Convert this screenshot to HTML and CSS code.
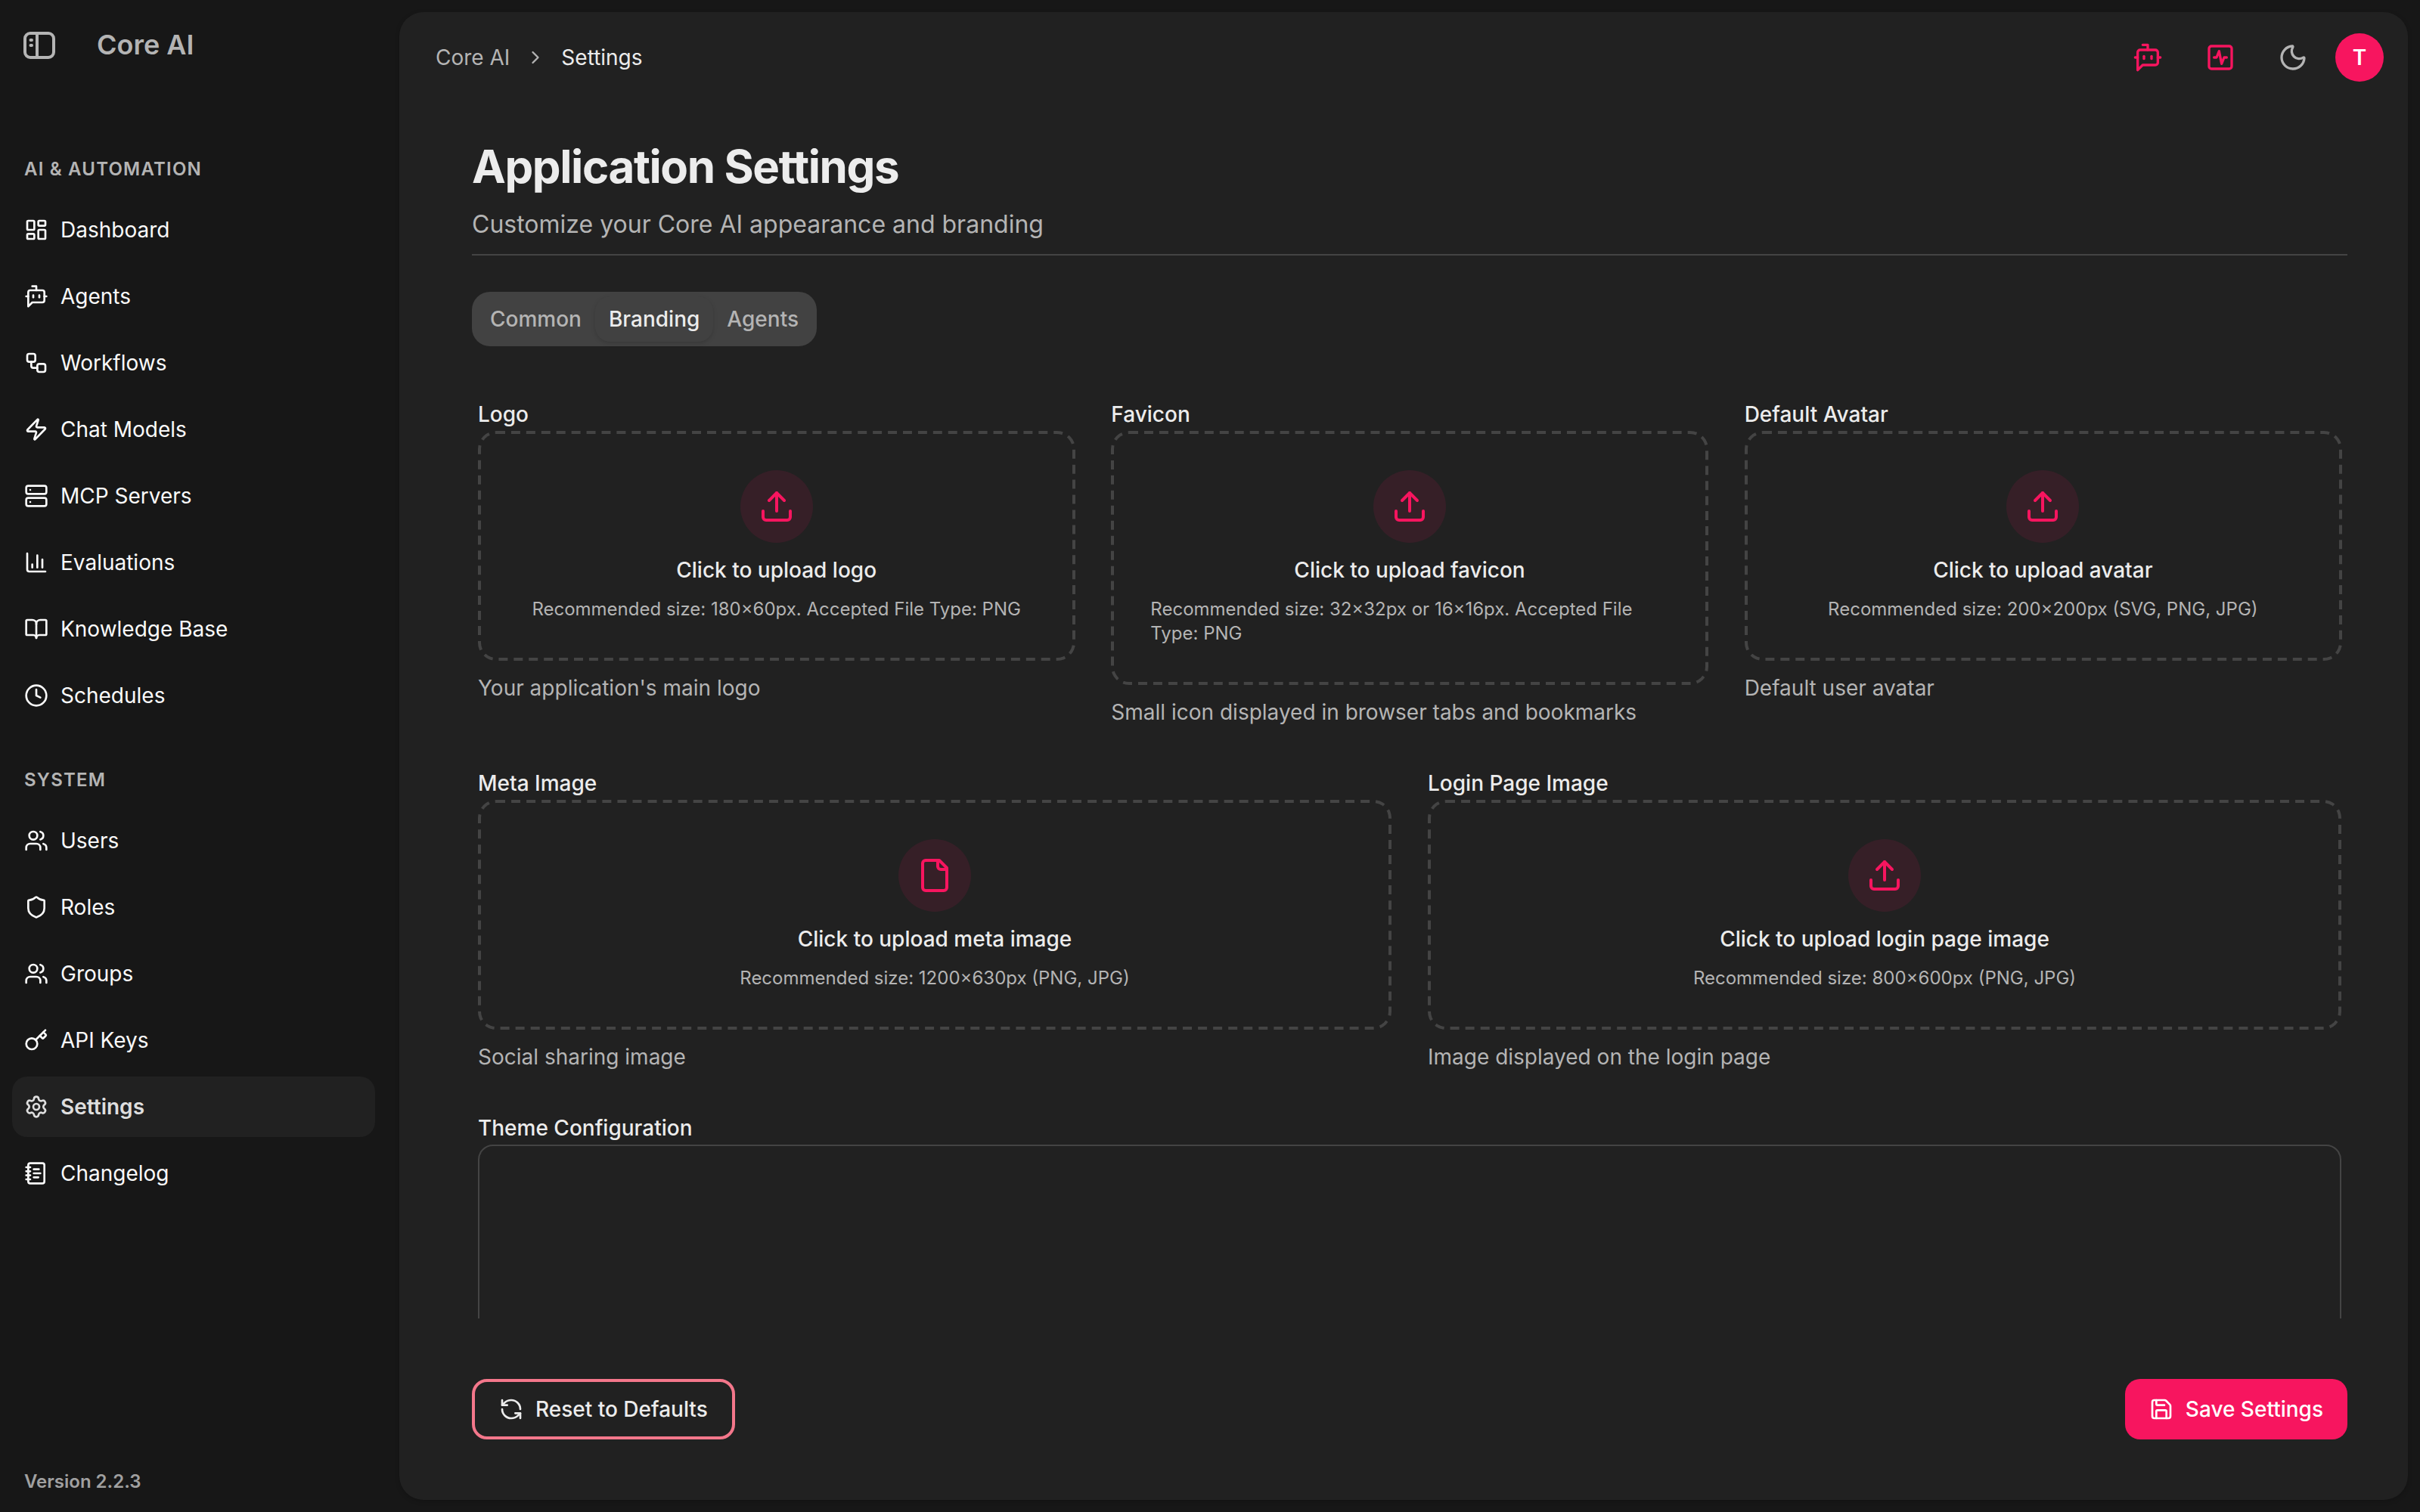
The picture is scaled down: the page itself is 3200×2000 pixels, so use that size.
FILE: index.html
```html
<!DOCTYPE html>
<html lang="en">
<head>
<meta charset="utf-8">
<title>Application Settings</title>
<link rel="stylesheet" href="styles.css">
</head>
<body>
<svg class="sprite" aria-hidden="true">
  <symbol id="i-bot" viewBox="0 0 24 24"><path d="M12 6V2H8"/><path d="m8 18-4 4V8a2 2 0 0 1 2-2h12a2 2 0 0 1 2 2v8a2 2 0 0 1-2 2Z"/><path d="M2 12h2"/><path d="M9 11v2"/><path d="M15 11v2"/><path d="M20 12h2"/></symbol>
  <symbol id="i-users" viewBox="0 0 24 24"><path d="M16 21v-2a4 4 0 0 0-4-4H6a4 4 0 0 0-4 4v2"/><circle cx="9" cy="7" r="4"/><path d="M22 21v-2a4 4 0 0 0-3-3.87"/><path d="M16 3.13a4 4 0 0 1 0 7.75"/></symbol>
  <symbol id="i-upload" viewBox="0 0 24 24"><path d="M21 15v4a2 2 0 0 1-2 2H5a2 2 0 0 1-2-2v-4"/><path d="m17 8-5-5-5 5"/><path d="M12 3v12"/></symbol>
</svg>
<div class="app">
  <aside class="sidebar">
    <div class="brand">
      <svg class="icon brand-toggle" viewBox="0 0 42 36"><rect x="2" y="2" width="38" height="32" rx="7"/><path d="M18 2v32"/><path d="M9.500 11h1.500M9.500 18h1.500"/></svg>
      <span class="brand-name">Core AI</span>
    </div>
    <nav class="nav">
      <section class="nav-group">
        <h2 class="nav-label">AI &amp; AUTOMATION</h2>
        <a class="nav-item"><svg class="icon" viewBox="0 0 24 24"><rect width="7" height="9" x="3" y="3" rx="1"/><rect width="7" height="5" x="14" y="3" rx="1"/><rect width="7" height="9" x="14" y="12" rx="1"/><rect width="7" height="5" x="3" y="16" rx="1"/></svg>Dashboard</a>
        <a class="nav-item"><svg class="icon"><use href="#i-bot"/></svg>Agents</a>
        <a class="nav-item"><svg class="icon" viewBox="0 0 24 24"><rect width="8" height="8" x="3" y="3" rx="2"/><path d="M7 11v4a2 2 0 0 0 2 2h4"/><rect width="8" height="8" x="13" y="13" rx="2"/></svg>Workflows</a>
        <a class="nav-item"><svg class="icon" viewBox="0 0 24 24"><path d="M4 14a1 1 0 0 1-.78-1.630l9.900-10.200a.5.5 0 0 1 .86.46l-1.920 6.020A1 1 0 0 0 13 10h7a1 1 0 0 1 .78 1.630l-9.900 10.200a.5.5 0 0 1-.86-.46l1.920-6.020A1 1 0 0 0 11 14z"/></svg>Chat Models</a>
        <a class="nav-item"><svg class="icon" viewBox="0 0 24 24"><rect width="20" height="8" x="2" y="2" rx="2"/><rect width="20" height="8" x="2" y="14" rx="2"/><path d="M6 6h.01M6 18h.01"/></svg>MCP Servers</a>
        <a class="nav-item"><svg class="icon" viewBox="0 0 24 24"><path d="M3 3v16a2 2 0 0 0 2 2h16"/><path d="M18 17V9"/><path d="M13 17V5"/><path d="M8 17v-3"/></svg>Evaluations</a>
        <a class="nav-item"><svg class="icon" viewBox="0 0 24 24"><path d="M12 7v14"/><path d="M3 18a1 1 0 0 1-1-1V4a1 1 0 0 1 1-1h5a4 4 0 0 1 4 4 4 4 0 0 1 4-4h5a1 1 0 0 1 1 1v13a1 1 0 0 1-1 1h-6a3 3 0 0 0-3 3 3 3 0 0 0-3-3z"/></svg>Knowledge Base</a>
        <a class="nav-item"><svg class="icon" viewBox="0 0 24 24"><circle cx="12" cy="12" r="10"/><path d="M12 6v6l4 2"/></svg>Schedules</a>
      </section>
      <section class="nav-group">
        <h2 class="nav-label">SYSTEM</h2>
        <a class="nav-item"><svg class="icon"><use href="#i-users"/></svg>Users</a>
        <a class="nav-item"><svg class="icon" viewBox="0 0 24 24"><path d="M20 13c0 5-3.500 7.500-7.660 8.950a1 1 0 0 1-.67-.01C7.500 20.500 4 18 4 13V6a1 1 0 0 1 1-1c2 0 4.500-1.200 6.240-2.720a1.170 1.170 0 0 1 1.520 0C14.510 3.810 17 5 19 5a1 1 0 0 1 1 1z"/></svg>Roles</a>
        <a class="nav-item"><svg class="icon"><use href="#i-users"/></svg>Groups</a>
        <a class="nav-item"><svg class="icon" viewBox="0 0 24 24"><path d="m15.500 7.500 2.300 2.300a1 1 0 0 0 1.400 0l2.100-2.100a1 1 0 0 0 0-1.400L19 4"/><path d="m21 2-9.600 9.600"/><circle cx="7.500" cy="15.500" r="5.500"/></svg>API Keys</a>
        <a class="nav-item active"><svg class="icon" viewBox="0 0 24 24"><path d="M9.671 4.136a2.340 2.340 0 0 1 4.659 0 2.340 2.340 0 0 0 3.319 1.915 2.340 2.340 0 0 1 2.330 4.033 2.340 2.340 0 0 0 0 3.831 2.340 2.340 0 0 1-2.330 4.033 2.340 2.340 0 0 0-3.319 1.915 2.340 2.340 0 0 1-4.659 0 2.340 2.340 0 0 0-3.320-1.915 2.340 2.340 0 0 1-2.330-4.033 2.340 2.340 0 0 0 0-3.831A2.340 2.340 0 0 1 6.350 6.051a2.340 2.340 0 0 0 3.319-1.915"/><circle cx="12" cy="12" r="3"/></svg>Settings</a>
        <a class="nav-item"><svg class="icon" viewBox="0 0 24 24"><path d="M2 6h4M2 10h4M2 14h4M2 18h4"/><rect width="16" height="20" x="4" y="2" rx="2"/><path d="M9.500 8h5M9.500 12H16M9.500 16H14"/></svg>Changelog</a>
      </section>
    </nav>
    <footer class="version">Version 2.2.3</footer>
  </aside>

  <main class="panel">
    <header class="topbar">
      <nav class="crumbs">
        <span>Core AI</span>
        <svg class="icon crumb-sep" viewBox="0 0 24 24"><path d="m9 18 6-6-6-6"/></svg>
        <span class="crumb-current">Settings</span>
      </nav>
      <div class="actions">
        <svg class="icon accent"><use href="#i-bot"/></svg>
        <svg class="icon accent" viewBox="0 0 24 24"><rect width="18" height="18" x="3" y="3" rx="2"/><path d="M17 12h-2l-2 5-2-10-2 5H7"/></svg>
        <svg class="icon" viewBox="0 0 24 24"><path d="M20.985 12.486a9 9 0 1 1-9.473-9.472c.405-.022.617.46.402.803a6 6 0 0 0 8.268 8.268c.344-.215.825-.004.803.401"/></svg>
        <span class="avatar">T</span>
      </div>
    </header>

    <div class="content">
      <div class="heading">
        <h1 class="title">Application Settings</h1>
        <p class="subtitle">Customize your Core AI appearance and branding</p>
      </div>

      <div class="scroll">
        <div class="tabs">
          <button class="tab">Common</button>
          <button class="tab selected">Branding</button>
          <button class="tab">Agents</button>
        </div>

        <form class="form">
          <div class="row three">
            <div class="field">
              <label class="label">Logo</label>
              <div class="drop">
                <span class="badge"><svg class="icon"><use href="#i-upload"/></svg></span>
                <span class="drop-title">Click to upload logo</span>
                <span class="drop-note">Recommended size: 180×60px. Accepted File Type: PNG</span>
              </div>
              <p class="help">Your application's main logo</p>
            </div>
            <div class="field">
              <label class="label">Favicon</label>
              <div class="drop">
                <span class="badge"><svg class="icon"><use href="#i-upload"/></svg></span>
                <span class="drop-title">Click to upload favicon</span>
                <span class="drop-note">Recommended size: 32×32px or 16×16px. Accepted File Type: PNG</span>
              </div>
              <p class="help">Small icon displayed in browser tabs and bookmarks</p>
            </div>
            <div class="field">
              <label class="label">Default Avatar</label>
              <div class="drop">
                <span class="badge"><svg class="icon"><use href="#i-upload"/></svg></span>
                <span class="drop-title">Click to upload avatar</span>
                <span class="drop-note">Recommended size: 200×200px (SVG, PNG, JPG)</span>
              </div>
              <p class="help">Default user avatar</p>
            </div>
          </div>
          <div class="row two">
            <div class="field">
              <label class="label">Meta Image</label>
              <div class="drop">
                <span class="badge"><svg class="icon" viewBox="0 0 24 24"><path d="M15 2H6a2 2 0 0 0-2 2v16a2 2 0 0 0 2 2h12a2 2 0 0 0 2-2V7Z"/><path d="M14 2v4a2 2 0 0 0 2 2h4"/></svg></span>
                <span class="drop-title">Click to upload meta image</span>
                <span class="drop-note">Recommended size: 1200×630px (PNG, JPG)</span>
              </div>
              <p class="help">Social sharing image</p>
            </div>
            <div class="field">
              <label class="label">Login Page Image</label>
              <div class="drop">
                <span class="badge"><svg class="icon"><use href="#i-upload"/></svg></span>
                <span class="drop-title">Click to upload login page image</span>
                <span class="drop-note">Recommended size: 800×600px (PNG, JPG)</span>
              </div>
              <p class="help">Image displayed on the login page</p>
            </div>
          </div>
          <div class="field">
            <label class="label">Theme Configuration</label>
            <div class="editor"></div>
          </div>
        </form>
      </div>

      <div class="footer">
        <button class="btn btn-outline"><svg class="icon" viewBox="0 0 24 24"><path d="M21 12a9 9 0 0 0-9-9 9.750 9.750 0 0 0-6.740 2.740L3 8"/><path d="M3 3v5h5"/><path d="M3 12a9 9 0 0 0 9 9 9.750 9.750 0 0 0 6.740-2.740L21 16"/><path d="M16 16h5v5"/></svg>Reset to Defaults</button>
        <button class="btn btn-primary"><svg class="icon" viewBox="0 0 24 24"><path d="M15.200 3a2 2 0 0 1 1.400.6l3.800 3.800a2 2 0 0 1 .6 1.400V19a2 2 0 0 1-2 2H5a2 2 0 0 1-2-2V5a2 2 0 0 1 2-2z"/><path d="M17 21v-7a1 1 0 0 0-1-1H8a1 1 0 0 0-1 1v7"/><path d="M7 3v4a1 1 0 0 0 1 1h7"/></svg>Save Settings</button>
      </div>
    </div>
  </main>
</div>
</body>
</html>
```
FILE: styles.css
```css
:root {
  --bg: #171717;
  --panel: #212121;
  --line: #444;
  --text: #ececec;
  --muted: #b4b4b4;
  --accent: #f7155f;
}

*, *::before { box-sizing: border-box; margin: 0; }

body {
  background: var(--bg);
  color: var(--text);
  font-family: "Inter", "Liberation Sans", sans-serif;
  font-size: 28px;
  line-height: 40px;
}

button {
  border: 0;
  background: none;
  color: inherit;
  font: inherit;
  letter-spacing: inherit;
}

.sprite { display: none; }

.icon {
  width: 32px;
  height: 32px;
  flex: none;
  fill: none;
  stroke: currentColor;
  stroke-width: 2;
  stroke-linecap: round;
  stroke-linejoin: round;
}

.app {
  display: flex;
  width: 3200px;
  height: 2000px;
  overflow: hidden;
}

/* Sidebar */
.sidebar {
  display: flex;
  flex-direction: column;
  width: 528px;
  flex: none;
}

.brand {
  display: flex;
  align-items: center;
  gap: 55px;
  height: 120px;
  padding-left: 31px;
  color: var(--muted);
}

.brand-toggle { width: 42px; height: 36px; stroke-width: 4; }

.brand-name { margin-bottom: 2px; font-size: 36px; font-weight: 600; }

.nav {
  display: flex;
  flex-direction: column;
  flex: 1;
  gap: 40px;
  padding: 72px 32px 0 16px;
}

.nav-group { display: flex; flex-direction: column; gap: 8px; }

.nav-label {
  height: 64px;
  padding-left: 16px;
  color: var(--muted);
  font-size: 24px;
  font-weight: 600;
  line-height: 64px;
  letter-spacing: 1.200px;
}

.nav-item {
  display: flex;
  align-items: center;
  gap: 16px;
  height: 80px;
  padding: 0 16px;
  border-radius: 20px;
  color: #fafafa;
}

.nav-item.active { background: var(--panel); color: #dedede; font-weight: 600; }

.version {
  padding: 0 0 20px 32px;
  color: #a0a0a0;
  font-size: 24px;
  font-weight: 600;
}

/* Main panel */
.panel {
  display: flex;
  flex-direction: column;
  flex: 1;
  margin: 16px 16px 16px 0;
  border-radius: 32px;
  background: var(--panel);
  box-shadow: 0 2px 6px rgba(0, 0, 0, 0.2);
}

.topbar {
  display: flex;
  align-items: center;
  justify-content: space-between;
  height: 120px;
  padding: 0 32px 0 48px;
  color: var(--muted);
}

.crumbs { display: flex; align-items: center; gap: 20px; }

.crumb-sep { width: 28px; height: 28px; }

.crumb-current { color: var(--text); }

.actions { display: flex; align-items: center; gap: 56px; }

.actions .icon { width: 40px; height: 40px; }

.accent { color: var(--accent); }

.avatar {
  width: 64px;
  height: 64px;
  margin-left: -20px;
  border-radius: 50%;
  background: var(--accent);
  color: #fff;
  font-weight: 600;
  line-height: 64px;
  text-align: center;
}

.content {
  display: flex;
  flex-direction: column;
  flex: 1;
  min-height: 0;
  padding: 48px 80px 80px 96px;
}

.heading {
  padding-bottom: 15px;
  border-bottom: 2px solid var(--line);
}

.title {
  font-size: 60px;
  font-weight: 700;
  line-height: 72px;
  letter-spacing: -1.400px;
}

.subtitle {
  margin-top: 17px;
  color: var(--muted);
  font-size: 32px;
  line-height: 48px;
}

.scroll {
  flex: 1;
  min-height: 0;
  margin: 48px 0 80px;
  overflow: hidden;
}

.tabs {
  display: inline-flex;
  height: 72px;
  padding: 6px;
  border-radius: 24px;
  background: #424242;
  vertical-align: top;
}

.tab {
  padding: 0 18px;
  border-radius: 20px;
  color: var(--muted);
  font-weight: 500;
}

.tab.selected {
  background: #414141;
  color: var(--text);
  box-shadow: 0 2px 6px rgba(0, 0, 0, 0.1), 0 2px 4px -2px rgba(0, 0, 0, 0.1);
}

.form {
  display: flex;
  flex-direction: column;
  gap: 48px;
  padding: 64px 8px 0;
}

.row { display: grid; gap: 48px; }
.three { grid-template-columns: repeat(3, minmax(0, 1fr)); }
.two { grid-template-columns: repeat(2, minmax(0, 1fr)); }

.label {
  display: block;
  height: 48px;
  padding-top: 2px;
  font-weight: 500;
  line-height: 48px;
}

.drop {
  position: relative;
  display: flex;
  flex-direction: column;
  align-items: center;
  gap: 16px;
  padding: 52px;
}

/* Drawn at half size and scaled up, which gives longer dashes with wider gaps */
.drop::before {
  content: "";
  position: absolute;
  top: 0;
  left: 0;
  width: 50%;
  height: 50%;
  border: 2px dashed var(--line);
  border-radius: 12px;
  transform: scale(2);
  transform-origin: 0 0;
}

.badge {
  display: grid;
  place-items: center;
  width: 96px;
  height: 96px;
  border-radius: 50%;
  background: rgba(248, 20, 95, 0.1);
  color: var(--accent);
}

.badge .icon { width: 48px; height: 48px; }

.drop-title { font-weight: 500; }

.drop-note { color: var(--muted); font-size: 24px; line-height: 32px; }

.help { margin-top: 16px; color: var(--muted); }

.editor {
  height: 600px;
  border: 2px solid var(--line);
  border-radius: 20px;
}

.footer { display: flex; justify-content: space-between; }

.btn {
  display: flex;
  align-items: center;
  gap: 16px;
  height: 80px;
  padding: 0 32px;
  border-radius: 20px;
  font-weight: 500;
}

.btn-outline { border: 4px solid #f4778b; }
.btn-primary { background: var(--accent); color: #fff; }
```
